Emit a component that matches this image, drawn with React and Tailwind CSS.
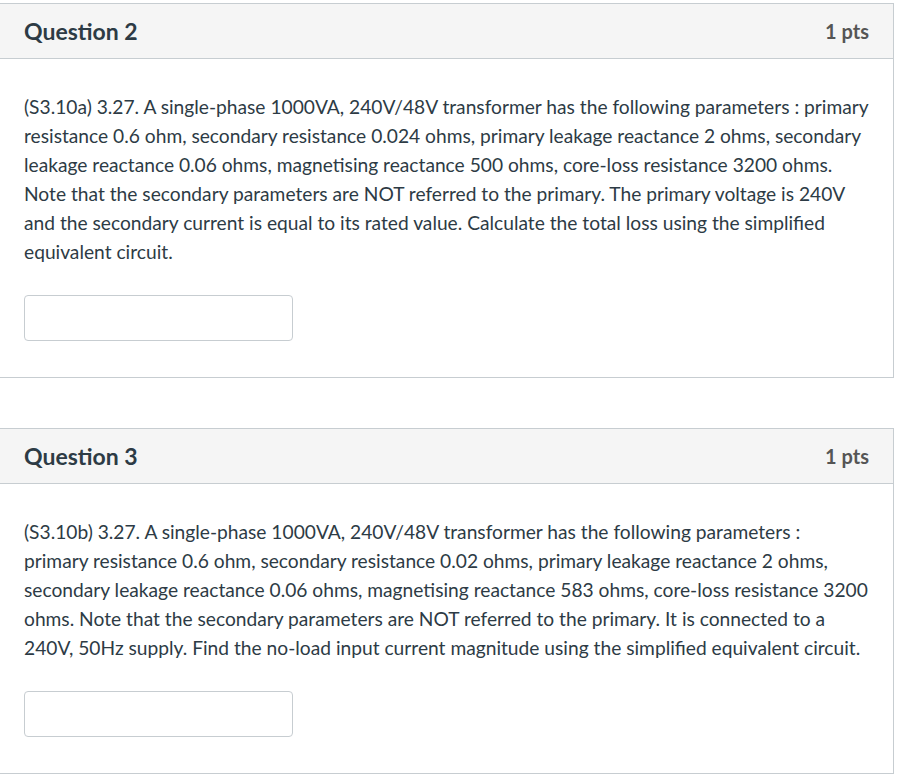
const QUESTIONS = [
  {
    title: "Question 2",
    points: "1 pts",
    lines: [
      "(S3.10a) 3.27. A single-phase 1000VA, 240V/48V transformer has the following parameters : primary",
      "resistance 0.6 ohm, secondary resistance 0.024 ohms, primary leakage reactance 2 ohms, secondary",
      "leakage reactance 0.06 ohms, magnetising reactance 500 ohms, core-loss resistance 3200 ohms.",
      "Note that the secondary parameters are NOT referred to the primary. The primary voltage is 240V",
      "and the secondary current is equal to its rated value. Calculate the total loss using the simplified",
      "equivalent circuit.",
    ],
  },
  {
    title: "Question 3",
    points: "1 pts",
    lines: [
      "(S3.10b) 3.27. A single-phase 1000VA, 240V/48V transformer has the following parameters :",
      "primary resistance 0.6 ohm, secondary resistance 0.02 ohms, primary leakage reactance 2 ohms,",
      "secondary leakage reactance 0.06 ohms, magnetising reactance 583 ohms, core-loss resistance 3200",
      "ohms. Note that the secondary parameters are NOT referred to the primary. It is connected to a",
      "240V, 50Hz supply. Find the no-load input current magnitude using the simplified equivalent circuit.",
    ],
  },
];

function QuestionCard({ q }) {
  return (
    <div className="border border-[#c7cdd1] ml-[-1px] w-[895px] bg-white">
      <div className="flex items-center justify-between h-[55px] px-6 bg-[#f5f5f5] border-b border-[#c7cdd1]">
        <h2 className="text-[23px] font-bold text-[#2d3b45]">{q.title}</h2>
        <span className="text-[20px] font-bold text-[#555]">{q.points}</span>
      </div>
      <div className="px-6 pt-[33px] pb-[36px]">
        <div className="text-[19.2px] leading-[29px] text-[#2d3b45]">
          {q.lines.map((l, i) => (
            <div key={i} className="whitespace-nowrap">{l}</div>
          ))}
        </div>
        <input
          type="text"
          className="mt-[29px] block w-[269px] h-[46px] border border-[#c7cdd1] rounded-[4px] bg-white outline-none"
        />
      </div>
    </div>
  );
}

export default function App() {
  return (
    <div
      className="min-h-screen bg-white pt-[3px] overflow-hidden"
      style={{ fontFamily: "Lato, 'Liberation Sans', sans-serif" }}
    >
      <div className="flex flex-col gap-[50px]">
        {QUESTIONS.map((q) => (
          <QuestionCard key={q.title} q={q} />
        ))}
      </div>
    </div>
  );
}
